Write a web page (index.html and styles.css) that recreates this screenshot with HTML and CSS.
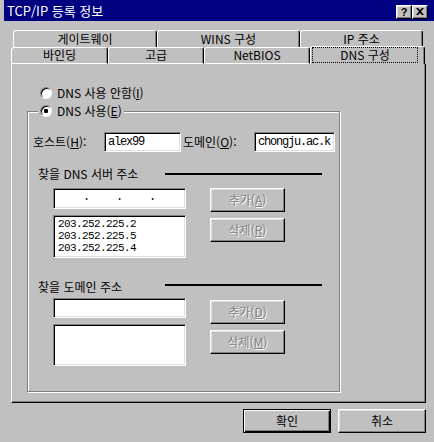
FILE: index.html
```html
<!DOCTYPE html>
<html lang="ko">
<head>
<meta charset="utf-8">
<title>TCP/IP 등록 정보</title>
<link rel="stylesheet" href="styles.css">
</head>
<body>
<div class="titlebar">
	<span class="title">TCP/IP 등록 정보</span>
	<span class="tbtn help">?</span>
	<span class="tbtn close"><svg width="8" height="7" viewBox="0 0 8 7"><path d="M0 0h2l2 2 2-2h2L5 3.5 8 7H6L4 5 2 7H0l3-3.5z" fill="#000"/></svg></span>
</div>

<div class="tabs back">
	<div class="tab t1">게이트웨이</div>
	<div class="tab t2">WINS 구성</div>
	<div class="tab t3">IP 주소</div>
</div>
<div class="tabs front">
	<div class="tab f1">바인딩</div>
	<div class="tab f2">고급</div>
	<div class="tab f3">NetBIOS</div>
	<div class="tab sel"><span class="focus">DNS 구성</span></div>
</div>

<div class="panel">
	<div class="radio-row"><span class="radio"></span>DNS 사용 안함(<u>I</u>)</div>

	<fieldset class="group">
		<legend><span class="radio on"></span>DNS 사용(<u>E</u>)</legend>

		<div class="host-row">
			<span class="lbl">호스트(<u>H</u>):</span>
			<div class="field mono host">alex99</div>
			<span class="lbl lbl2">도메인(<u>O</u>):</span>
			<div class="field mono domain">chongju.ac.k</div>
		</div>

		<div class="section-title"><span>찾을 DNS 서버 주소</span><span class="rule"></span></div>
		<div class="section">
			<div class="col">
				<div class="field mono ip"><span>.</span><span>.</span><span>.</span></div>
				<div class="field mono list">203.252.225.2<br>203.252.225.5<br>203.252.225.4</div>
			</div>
			<div class="col">
				<div class="btn disabled">추가(<u>A</u>)</div>
				<div class="btn disabled">삭제(<u>R</u>)</div>
			</div>
		</div>

		<div class="section-title second"><span>찾을 도메인 주소</span><span class="rule"></span></div>
		<div class="section tight">
			<div class="col">
				<div class="field suffix"></div>
				<div class="field list short"></div>
			</div>
			<div class="col lower">
				<div class="btn disabled">추가(<u>D</u>)</div>
				<div class="btn disabled">삭제(<u>M</u>)</div>
			</div>
		</div>
	</fieldset>
</div>

<div class="actions">
	<div class="btn default">확인</div>
	<div class="btn">취소</div>
</div>
</body>
</html>
```

FILE: styles.css
```css
* {
	box-sizing: border-box;
}
body {
	margin: 0;
	width: 434px;
	height: 442px;
	overflow: hidden;
	background: #c0c0c0;
	color: #000;
	font-family: "Noto Sans CJK KR", sans-serif;
	font-size: 12px;
	line-height: 16px;
}
u {
	text-decoration: underline;
	text-underline-offset: 1px;
}

/* title bar */
.titlebar {
	display: flex;
	align-items: center;
	height: 21px;
	margin-left: 4px;
	padding: 0 6px 0 3px;
	background: #000080;
	color: #fff;
	font-size: 13px;
}
.title {
	flex: 1;
	line-height: 21px;
}
.tbtn {
	display: flex;
	align-items: center;
	justify-content: center;
	width: 16px;
	height: 14px;
	margin-top: 2px;
	background: #c0c0c0;
	border: 1px solid;
	border-color: #fff #000 #000 #fff;
	box-shadow: inset -1px -1px #808080, inset 1px 1px #dfdfdf;
	color: #000;
	font: bold 11px "Liberation Sans", sans-serif;
}

/* tabs */
.tabs {
	display: flex;
	align-items: flex-end;
	height: 17px;
}
.tabs.back {
	margin: 9px 0 0 13px;
}
.tabs.front {
	margin-left: 11px;
}
.tab {
	height: 17px;
	border-top: 1px solid #fff;
	border-left: 1px solid #fff;
	border-right: 1px solid #000;
	border-radius: 3px 3px 0 0;
	box-shadow: inset -1px 0 #808080;
	text-align: center;
	line-height: 15px;
}
.front .tab {
	border-bottom: 1px solid #fff;
	line-height: 14px;
}
.t1 { width: 144px; }
.t2 { width: 143px; }
.t3 { width: 123px; }
.f1 { width: 97px; }
.f2 { width: 96px; }
.f3 { width: 106px; }
.front .tab.sel {
	width: 115px;
	height: 18px;
	padding: 0 6px 0 1px;
	border-bottom: none;
}
.focus {
	display: block;
	height: 16px;
	outline: 1px dotted #000;
	outline-offset: -1px;
	line-height: 15px;
}

/* page panel */
.panel {
	display: flow-root;
	width: 415px;
	height: 339px;
	margin-left: 11px;
	border-left: 1px solid #fff;
	border-right: 1px solid #000;
	border-bottom: 1px solid #000;
	box-shadow: inset -1px -1px #808080;
}
.radio-row {
	display: flex;
	align-items: center;
	height: 16px;
	margin-top: 21px;
	padding-left: 28px;
}
.radio {
	display: inline-block;
	width: 12px;
	height: 12px;
	margin-right: 5px;
	border-radius: 50%;
	border: 1px solid;
	border-color: #808080 #fff #fff #808080;
	box-shadow: inset 1px 1px #000;
	background: #fff;
}
.radio.on {
	background: radial-gradient(circle, #000 0, #000 2px, #fff 2.5px);
}

.group {
	width: 313px;
	height: 289px;
	min-width: 0;
	margin: 2px 0 0 15px;
	padding: 0;
	border: 1px solid #808080;
	box-shadow: inset 1px 1px #fff, 1px 1px #fff;
}
.group legend {
	display: flex;
	align-items: center;
	height: 16px;
	margin-left: 10px;
	padding: 0 2px;
	background: #c0c0c0;
}

.host-row {
	display: flex;
	align-items: center;
	height: 20px;
	margin-top: 13px;
	padding-left: 5px;
}
.lbl {
	width: 71px;
	white-space: nowrap;
}
.lbl2 {
	margin-left: 2px;
}

.field {
	background: #fff;
	border: 1px solid;
	border-color: #808080 #fff #fff #808080;
	box-shadow: inset 1px 1px #000, inset -1px -1px #dfdfdf;
	overflow: hidden;
	white-space: nowrap;
}
.mono {
	font-family: "Liberation Mono", monospace;
	font-size: 12px;
	letter-spacing: -1.2px;
}
.host {
	width: 77px;
	height: 20px;
	padding-left: 3px;
	line-height: 18px;
}
.domain {
	width: 81px;
	height: 20px;
	padding-left: 3px;
	line-height: 18px;
}

.section-title {
	display: grid;
	grid-template-columns: 127px 157px;
	align-items: center;
	height: 16px;
	margin-top: 14px;
	padding-left: 10px;
}
.section-title.second {
	margin-top: 21px;
}
.rule {
	height: 2px;
	background: #000;
}
.second .rule {
	margin-bottom: 4px;
}

.section {
	display: flex;
	gap: 24px;
	margin-top: 6px;
	padding-left: 25px;
}
.section.tight {
	margin-top: 3px;
}
.col {
	display: flex;
	flex-direction: column;
	gap: 6px;
}
.col.lower {
	padding-top: 2px;
}
.ip {
	display: flex;
	width: 133px;
	height: 21px;
	padding-left: 29px;
	line-height: 17px;
}
.ip span {
	width: 33px;
}
.list {
	width: 133px;
	height: 43px;
	padding: 2px 0 0 4px;
	font-size: 11px;
	letter-spacing: -0.6px;
	line-height: 12px;
}
.suffix {
	width: 133px;
	height: 20px;
}
.list.short {
	height: 42px;
}

/* buttons */
.btn {
	display: flex;
	align-items: center;
	justify-content: center;
	width: 75px;
	height: 24px;
	background: #c0c0c0;
	border: 1px solid;
	border-color: #fff #000 #000 #fff;
	box-shadow: inset -1px -1px #808080, inset 1px 1px #dfdfdf;
}
.btn.disabled {
	color: #808080;
	text-shadow: 1px 1px 0 #fff;
}
.actions {
	display: flex;
	justify-content: flex-end;
	gap: 7px;
	margin-top: 6px;
	padding-right: 8px;
}
.actions .btn {
	width: 88px;
}
.btn.default {
	border-color: #000;
	box-shadow: inset 1px 1px #fff, inset -1px -1px #000, inset -2px -2px #808080;
}
```
